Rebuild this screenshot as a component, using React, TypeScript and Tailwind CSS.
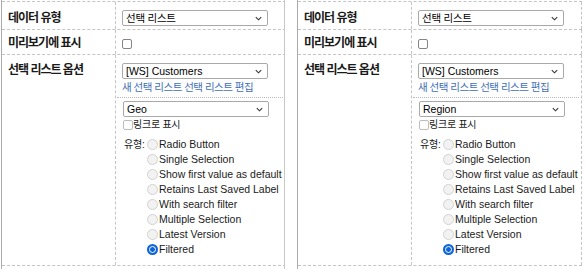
import React from "react"

const types = [
  "Radio Button",
  "Single Selection",
  "Show first value as default",
  "Retains Last Saved Label",
  "With search filter",
  "Multiple Selection",
  "Latest Version",
  "Filtered",
]

function Chevron() {
  return (
    <svg width="7" height="5" viewBox="0 0 7 5" className="shrink-0">
      <path d="M0.8 1.2 L3.5 3.8 L6.2 1.2" fill="none" stroke="#333" strokeWidth="1.1" />
    </svg>
  )
}

function Select({ children, className = "" }: { children: React.ReactNode; className?: string }) {
  return (
    <div
      className={`flex h-[16px] w-[146px] items-center justify-between rounded-[2px] border border-[#a9a9a9] bg-white pl-[3px] pr-[5px] ${className}`}
    >
      <span className="text-[10.5px] leading-[14px] text-black">{children}</span>
      <Chevron />
    </div>
  )
}

function Radio({ checked }: { checked?: boolean }) {
  if (checked) {
    return (
      <span className="flex h-[11px] w-[11px] shrink-0 items-center justify-center rounded-full bg-[#0b64d8]">
        <span className="h-[7px] w-[7px] rounded-full border-[1.5px] border-white bg-[#0b64d8]" />
      </span>
    )
  }
  return <span className="h-[11px] w-[11px] shrink-0 rounded-full border border-[#d2d2d2] bg-[#f2f2f2]" />
}

function Panel({ sub, className = "" }: { sub: string; className?: string }) {
  return (
    <div className={`h-[269px] overflow-hidden border-l border-[#aaaaaa] pt-[1px] ${className}`}>
      <div className="w-[284px]">
        {/* 데이터 유형 */}
        <div className="flex h-[28px] border-t border-dashed border-[#c4c4c4]">
          <div className="w-[114px] shrink-0 border-r border-dashed border-[#c4c4c4] pl-[6px] pt-[8px] text-[12px] font-bold leading-[16px] tracking-[-1px] text-[#1a1a1a]">
            데이터 유형
          </div>
          <div className="flex-1 border-r border-dashed border-[#c4c4c4] pl-[6px] pt-[8px]">
            <Select>
              <span className="text-[10.5px] tracking-[-0.25px]">선택 리스트</span>
            </Select>
          </div>
        </div>

        {/* 미리보기에 표시 */}
        <div className="flex h-[25px] border-t border-dashed border-[#c4c4c4]">
          <div className="w-[114px] shrink-0 border-r border-dashed border-[#c4c4c4] pl-[6px] pt-[5px] text-[12px] font-bold leading-[16px] tracking-[-1px] text-[#1a1a1a]">
            미리보기에 표시
          </div>
          <div className="flex-1 border-r border-dashed border-[#c4c4c4] pl-[6px] pt-[9px]">
            <span className="block h-[10px] w-[10px] rounded-[2px] border border-[#858585] bg-white" />
          </div>
        </div>

        {/* 선택 리스트 옵션 */}
        <div className="flex h-[212px] border-y border-dashed border-[#c4c4c4]">
          <div className="w-[114px] shrink-0 border-r border-dashed border-[#c4c4c4] pl-[6px] pt-[8px] text-[12px] font-bold leading-[14px] tracking-[-1px] text-[#1a1a1a]">
            선택 리스트 옵션
          </div>
          <div className="flex-1 border-r border-dashed border-[#c4c4c4] pt-[8px]">
            <Select className="ml-[6px]">[WS] Customers</Select>
            <div className="ml-[6px] mt-[2px] whitespace-nowrap text-[10.5px] leading-[12px] tracking-[-0.5px] text-[#3f6fb5]">
              새 선택 리스트 선택 리스트 편집
            </div>
            <div className="ml-[1px] mr-[2px] mt-[4px] border-t border-dotted border-[#b8b8b8] pl-[6px] pt-[3px]">
              <Select>{sub}</Select>
              <div className="mt-[1px] flex h-[13px] items-center">
                <span className="h-[10px] w-[10px] shrink-0 rounded-[2px] border border-[#bdbdbd] bg-white" />
                <span className="text-[10px] leading-[13px] tracking-[-0.25px] text-[#1a1a1a]">링크로 표시</span>
              </div>
              <div className="mt-[6px] flex">
                <div className="w-[24px] shrink-0 pl-[1px] text-[10px] leading-[15px] tracking-[-0.25px] text-[#1a1a1a]">유형:</div>
                <div className="flex flex-col">
                  {types.map((t) => (
                    <div key={t} className="flex h-[15px] items-center">
                      <Radio checked={t === "Filtered"} />
                      <span className="whitespace-nowrap pl-[1px] text-[10.5px] leading-[15px] text-[#1a1a1a]">{t}</span>
                    </div>
                  ))}
                </div>
              </div>
            </div>
          </div>
        </div>
      </div>
    </div>
  )
}

export default function App() {
  return (
    <div className="flex h-[269px] w-[585px] bg-white pl-[1px] font-['Liberation_Sans','Noto_Sans_CJK_KR',sans-serif]">
      <Panel sub="Geo" className="w-[284px] shrink-0 border-r border-r-[#c8c8c8]" />
      <Panel sub="Region" className="ml-[12px] flex-1" />
    </div>
  )
}
